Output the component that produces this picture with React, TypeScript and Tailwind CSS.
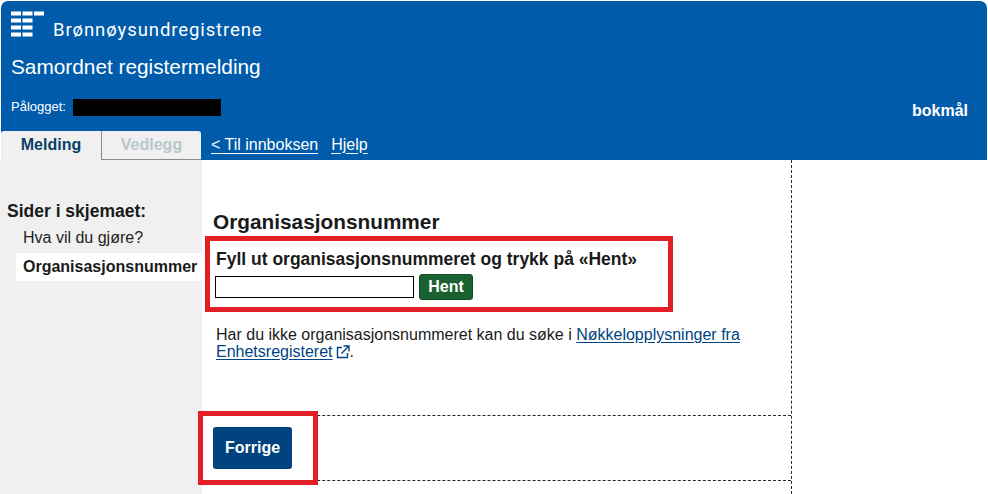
const sans = "font-['Liberation_Sans',Arial,sans-serif]";

function Logo() {
  const rows = [0, 1, 2, 3];
  return (
    <svg width="34" height="28" viewBox="0 0 34 28" className="shrink-0" fill="#fff">
      {rows.map((r) => (
        <rect key={`a${r}`} x="0" y={r * 7 + 0.5} width="10" height="4" />
      ))}
      {rows.map((r) => (
        <rect key={`b${r}`} x="11.5" y={r * 7 + 0.5} width="10" height="4" />
      ))}
      <rect x="23" y="0.5" width="10" height="4" />
    </svg>
  );
}

function ExternalIcon() {
  return (
    <svg width="14" height="14" viewBox="0 0 14 14" fill="none" stroke="#00437f" strokeWidth="1.4" className="inline-block align-[-2px] ml-[3px]">
      <path d="M6 2.5H1.5v10h10V8" />
      <path d="M7.5 1h5.5v5.5M13 1 5.5 8.5" />
    </svg>
  );
}

export default function App() {
  return (
    <div className={`relative w-[988px] h-[494px] overflow-hidden bg-white text-[#1a1a1a] ${sans}`}>
      <header className="mt-[1px] ml-[1px] h-[159px] w-[986px] bg-[#005cab] rounded-t-[7px] flex flex-col text-white">
        <div className="h-[43px] flex pl-[10px] pt-[10px]">
          <Logo />
          <span className="ml-[8px] mt-[7px] font-['Roboto',sans-serif] text-[18.5px] leading-[24px] tracking-[0.9px]">
            Brønnøysundregistrene
          </span>
        </div>
        <div className="h-[54px] pl-[10px] pt-[9px] text-[20.8px] leading-[28px]">Samordnet registermelding</div>
        <div className="h-[33px] flex items-start justify-between pl-[10px] pr-[19px]">
          <div className="flex items-center h-[18px] text-[13px]">
            <span>Pålogget:</span>
            <span className="ml-[7px] w-[148px] h-[17px] bg-black" />
          </div>
          <span className="mt-[4px] text-[16px] leading-[18px] font-bold">bokmål</span>
        </div>
        <nav className="mt-auto flex h-[29px] items-stretch">
          <div className="w-[100px] pb-[2px] bg-[#f0f0f0] rounded-tl-[3px] flex items-center justify-center text-[16px] font-bold text-[#0a3f66]">
            Melding
          </div>
          <div className="w-[100px] pb-[1px] bg-[#f0f0f0] border-l border-b border-[#8a8a8a] rounded-tr-[3px] flex items-center justify-center text-[16px] font-bold text-[#b9c7cc]">
            Vedlegg
          </div>
          <div className="ml-[10px] pb-[2px] flex items-center gap-[13px] text-[16px]">
            <a className="underline underline-offset-[3px]">&lt; Til innboksen</a>
            <a className="underline underline-offset-[3px]">Hjelp</a>
          </div>
        </nav>
      </header>

      <div className="flex h-[334px]">
        <aside className="w-[202px] shrink-0 bg-[#f0f0f0] pt-[41px]">
          <h2 className="pl-[7px] text-[17.5px] leading-[20px] font-bold whitespace-nowrap">Sider i skjemaet:</h2>
          <div className="mt-[7px] pl-[23px] text-[16px] leading-[20px] text-[#222]">Hva vil du gjøre?</div>
          <div className="mt-[5px] ml-[16px] pl-[7px] h-[28px] flex items-center bg-white text-[16px] font-bold whitespace-nowrap">
            Organisasjonsnummer
          </div>
        </aside>

        <main className="w-[590px] shrink-0 border-r border-dashed border-[#1f2a37]">
          <div className="h-[255px] pl-[11px] pt-[49px]">
            <h1 className="text-[20.8px] leading-[26px] font-bold whitespace-nowrap">Organisasjonsnummer</h1>
            <p className="mt-[14px] pl-[3px] text-[17.5px] leading-[20px] font-bold whitespace-nowrap">
              Fyll ut organisasjonsnummeret og trykk på «Hent»
            </p>
            <div className="mt-[5px] pl-[2px] flex items-center gap-[5px]">
              <input className="w-[199px] h-[22px] border border-black bg-white" />
              <button className="w-[54px] h-[26px] rounded-[3px] bg-[#1b6030] border border-[#14502a] text-white text-[16px] font-bold">
                Hent
              </button>
            </div>
            <div className="mt-[26px] pl-[3px] text-[16px] leading-[17px] whitespace-nowrap">
              <div>
                Har du ikke organisasjonsnummeret kan du søke i{" "}
                <a className="text-[#00437f] underline underline-offset-[2px]">Nøkkelopplysninger fra</a>
              </div>
              <div>
                <a className="text-[#00437f] underline underline-offset-[2px]">
                  Enhetsregisteret
                  <ExternalIcon />
                </a>
                .
              </div>
            </div>
          </div>
          <div className="h-[66px] border-y border-dashed border-[#1f2a37] pl-[11px] pt-[11px]">
            <button className="w-[79px] h-[42px] rounded-[3px] bg-[#00437f] text-white text-[16px] font-bold">
              Forrige
            </button>
          </div>
        </main>
      </div>

      <div className="absolute left-[205px] top-[236px] w-[468px] h-[76px] border-[5px] border-[#e41e26]" />
      <div className="absolute left-[198px] top-[411px] w-[120px] h-[74px] border-[5px] border-[#e41e26]" />
    </div>
  );
}
